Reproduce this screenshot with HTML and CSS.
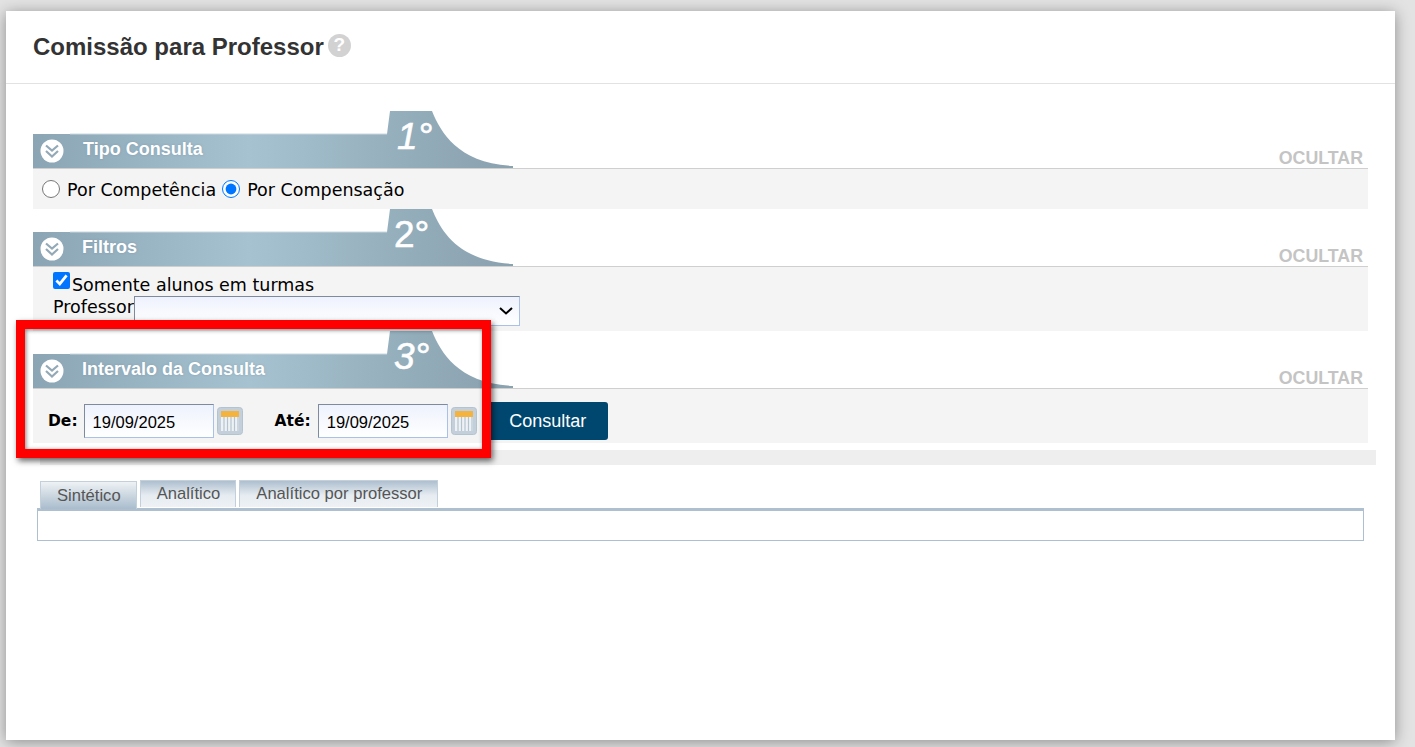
FILE: index.html
```html
<!DOCTYPE html>
<html lang="pt-BR">
<head>
    <meta charset="UTF-8">
    <title>Comissão para Professor</title>
    <link rel="stylesheet" href="styles.css">
</head>
<body>
    <svg class="sprites" width="0" height="0">
        <defs>
            <linearGradient id="bannerFill" x1="0" x2="1" y1="0" y2="0">
                <stop offset="0" stop-color="#8ba5b4"/>
                <stop offset="0.45" stop-color="#a6c2d0"/>
                <stop offset="0.8" stop-color="#93acba"/>
                <stop offset="1" stop-color="#8aa1af"/>
            </linearGradient>
            <symbol id="bannerShape" viewBox="0 0 480 57">
                <path d="M0 23H354L357 0H399C408 22 425 52 480 55V57H0Z" fill="url(#bannerFill)"/>
                <path d="M37 23H354" stroke="#c9d8df" stroke-width="1"/>
            </symbol>
            <symbol id="chevrons" viewBox="0 0 24 24">
                <circle cx="12" cy="12" r="11.5" fill="#fff"/>
                <path d="M6 6.5l6 5 6-5M6 12l6 5.500 6-5.500" fill="none" stroke="#93a9b7" stroke-width="2.200"/>
            </symbol>
            <symbol id="calendar" viewBox="0 0 26 28">
                <rect x="0.500" y="0.500" width="25" height="27" rx="3" fill="#c3d0dc" stroke="#b4c3d0"/>
                <rect x="4" y="4" width="18" height="20" fill="#eef2f5"/>
                <path d="M7 10v14M10.500 10v14M14 10v14M17.500 10v14M21 10v14" stroke="#b5c3cf" stroke-width="1.200"/>
                <rect x="4" y="4" width="18" height="6" fill="#f4b23f"/>
            </symbol>
        </defs>
    </svg>

    <div class="page">
        <header class="page-header">
            <h1>Comissão para Professor</h1>
            <span class="help-icon">?</span>
        </header>

        <main class="page-body">
            <section class="step">
                <div class="step-head">
                    <svg class="banner" width="480" height="57">
                        <use href="#bannerShape"/>
                        <text class="banner-num" x="364" y="38">1°</text>
                    </svg>
                    <svg class="step-icon" width="24" height="24"><use href="#chevrons"/></svg>
                    <h2 class="step-title first">Tipo Consulta</h2>
                    <a class="step-toggle">OCULTAR</a>
                </div>
                <div class="step-body radios">
                    <input type="radio" name="tipo" id="competencia">
                    <label for="competencia">Por Competência</label>
                    <input type="radio" name="tipo" id="compensacao" checked>
                    <label for="compensacao">Por Compensação</label>
                </div>
            </section>

            <section class="step">
                <div class="step-head">
                    <svg class="banner" width="480" height="57">
                        <use href="#bannerShape"/>
                        <text class="banner-num upright" x="361" y="38">2°</text>
                    </svg>
                    <svg class="step-icon" width="24" height="24"><use href="#chevrons"/></svg>
                    <h2 class="step-title">Filtros</h2>
                    <a class="step-toggle">OCULTAR</a>
                </div>
                <div class="step-body filters">
                    <div class="filter-check">
                        <input type="checkbox" id="turmas" checked>
                        <label for="turmas">Somente alunos em turmas</label>
                    </div>
                    <div class="filter-select">
                        <label for="professor">Professor</label>
                        <select id="professor"><option></option></select>
                    </div>
                </div>
            </section>

            <section class="step">
                <div class="step-head">
                    <svg class="banner" width="480" height="57">
                        <use href="#bannerShape"/>
                        <text class="banner-num" x="361" y="38">3°</text>
                    </svg>
                    <svg class="step-icon" width="24" height="24"><use href="#chevrons"/></svg>
                    <h2 class="step-title">Intervalo da Consulta</h2>
                    <a class="step-toggle">OCULTAR</a>
                </div>
                <div class="step-body dates">
                    <label class="date-label" for="de">De:</label>
                    <input class="date-input" type="text" id="de" value="19/09/2025">
                    <svg class="date-icon" width="26" height="28"><use href="#calendar"/></svg>
                    <label class="date-label until" for="ate">Até:</label>
                    <input class="date-input" type="text" id="ate" value="19/09/2025">
                    <svg class="date-icon" width="26" height="28"><use href="#calendar"/></svg>
                    <button class="btn-search">Consultar</button>
                </div>
            </section>

            <div class="divider"></div>

            <div class="tabs">
                <a class="tab active">Sintético</a>
                <a class="tab">Analítico</a>
                <a class="tab">Analítico por professor</a>
            </div>
            <div class="tab-panel"></div>
        </main>
    </div>

    <!-- Red callout over step 3 -->
    <div class="callout"></div>
</body>
</html>
```

FILE: styles.css
```css
* {
    margin: 0;
    padding: 0;
    box-sizing: border-box;
}
html, body {
    height: 100%;
    overflow: hidden;
}
body {
    position: relative;
    background: #e3e3e3;
    font-family: "DejaVu Sans", Verdana, sans-serif;
    color: #000;
    padding: 11px 20px 7px 6px;
}
.sprites {
    position: absolute;
}
.page {
    height: 100%;
    background: #fff;
    box-shadow: 0 2px 14px rgba(0, 0, 0, 0.38);
}

/* Header */
.page-header {
    height: 73px;
    padding-left: 27px;
    border-bottom: 1px solid #e2e2e2;
    display: flex;
    align-items: center;
    gap: 4px;
}
.page-header h1 {
    font-family: "Liberation Sans", Arial, sans-serif;
    font-size: 24px;
    font-weight: bold;
    color: #333;
}
.help-icon {
    width: 23px;
    height: 23px;
    margin-top: -4px;
    border-radius: 50%;
    background: #d2d2d2;
    color: #fff;
    font-family: "Liberation Sans", Arial, sans-serif;
    font-size: 19px;
    font-weight: bold;
    display: flex;
    align-items: center;
    justify-content: center;
}

/* Steps */
.page-body {
    padding: 27px 0 0 27px;
}
.step {
    width: 1335px;
}
.step-head {
    position: relative;
    height: 58px;
    padding-top: 23px;
    border-bottom: 1px solid #cfcfcf;
    display: flex;
    align-items: flex-start;
}
.banner {
    position: absolute;
    left: 0;
    top: 0;
}
.banner-num {
    font-family: "Liberation Sans", Arial, sans-serif;
    font-size: 37px;
    font-style: italic;
    fill: #fff;
    stroke: #fff;
    stroke-width: 0.6px;
}
.banner-num.upright {
    font-style: normal;
}
.step-icon {
    position: relative;
    margin: 5px 0 0 7px;
}
.step-title {
    position: relative;
    margin: 5px 0 0 18px;
    font-family: "Liberation Sans", Arial, sans-serif;
    font-size: 18px;
    font-weight: bold;
    color: #fff;
    text-shadow: 0 0 2px rgba(120, 150, 170, 0.8);
}
.step-title.first {
    margin-left: 19px;
}
.step-toggle {
    margin: auto 5px 0 auto;
    font-family: "Liberation Sans", Arial, sans-serif;
    font-size: 17.800px;
    font-weight: bold;
    line-height: 20px;
    color: #c4c4c4;
}
.step-body {
    background: #f4f4f4;
    font-size: 17.500px;
}
.radios {
    height: 40px;
    padding-left: 9px;
    display: flex;
    align-items: center;
}
.radios input {
    width: 18px;
    height: 18px;
    margin-right: 7px;
}
.radios label {
    margin-right: 6px;
    padding-top: 1px;
}

/* Filters */
.filters {
    height: 64px;
    padding: 5px 0 0 20px;
}
.filter-check {
    display: flex;
    align-items: flex-start;
    height: 24px;
}
.filter-check input {
    width: 17px;
    height: 17px;
}
.filter-check label {
    margin: 3px 0 0 2px;
}
.filter-select {
    display: flex;
    align-items: flex-start;
}
.filter-select label {
    margin-top: 1px;
}
.filter-select select {
    appearance: none;
    width: 386px;
    height: 30px;
    border: 1px solid #a9c0e8;
    border-top-color: #7f8a9c;
    border-left-color: #7f8a9c;
    background: url("data:image/svg+xml,%3Csvg xmlns='http://www.w3.org/2000/svg' width='14' height='8'%3E%3Cpath d='M1 1l6 5.500 6-5.500' fill='none' stroke='%23000' stroke-width='2'/%3E%3C/svg%3E") no-repeat right 6px center, linear-gradient(#eef2fd, #fff);
    border-radius: 0;
}

/* Dates */
.dates {
    height: 54px;
    padding: 10px 0 0 15px;
    display: flex;
    align-items: center;
}
.date-label {
    font-size: 15.500px;
    font-weight: bold;
}
.date-label.until {
    margin-left: 32px;
}
.date-input {
    width: 130px;
    height: 34px;
    margin-left: 6px;
    padding: 2px 0 0 8px;
    border: 1px solid #a9c0e8;
    border-top-color: #7f8a9c;
    border-left-color: #7f8a9c;
    background: linear-gradient(#eef2fd, #fff);
    font-family: "Liberation Sans", Arial, sans-serif;
    font-size: 16.500px;
}
.date-label.until + .date-input {
    margin-left: 7px;
}
.date-icon {
    margin-left: 3px;
}
.btn-search {
    width: 120px;
    height: 38px;
    margin-left: 11px;
    background: #00476f;
    color: #fff;
    border: none;
    border-radius: 3px;
    font-family: "Liberation Sans", Arial, sans-serif;
    font-size: 18px;
}

.divider {
    width: 1336px;
    height: 15px;
    margin: 7px 0 0 7px;
    background: #eee;
}

/* Tabs */
.tabs {
    height: 28px;
    margin: 15px 0 0 7px;
    display: flex;
    align-items: flex-start;
    gap: 3px;
    font-family: "Liberation Sans", Arial, sans-serif;
    font-size: 16.600px;
}
.tab {
    height: 27px;
    padding: 0 15px 0 16px;
    border: 1px solid #c3cfda;
    border-bottom: none;
    background: linear-gradient(#aebfcf, #e6ecf1 55%, #eef2f5);
    color: #555;
    display: flex;
    align-items: center;
}
.tab.active {
    height: 28px;
    margin-top: 1px;
    padding: 1px 15px 0 16px;
    background: linear-gradient(#eef2f5, #c8d4de 55%, #a9bccd);
}
.tab-panel {
    width: 1327px;
    height: 33px;
    margin-left: 4px;
    background: #fff;
    border: 1px solid #aebfcf;
    border-top-width: 3px;
}

/* Callout */
.callout {
    position: absolute;
    left: 16px;
    top: 320px;
    width: 475px;
    height: 138px;
    border: 9px solid #f00;
    box-shadow: 2px 3px 6px rgba(0, 0, 0, 0.6), inset 1px 1px 4px rgba(0, 0, 0, 0.5);
}
```
